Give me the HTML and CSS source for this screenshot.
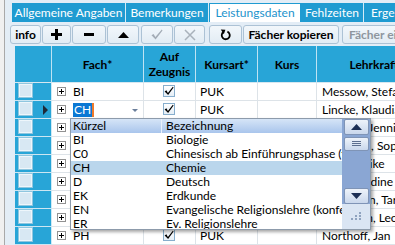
FILE: index.html
```html
<!DOCTYPE html>
<html>
<head>
<meta charset="utf-8">
<link rel="stylesheet" href="styles.css">
</head>
<body>
<div class="app">
  <div class="side"></div>
  <div class="main">
    <div class="tabs">
      <div class="tab t1">Allgemeine Angaben</div>
      <div class="tab t2">Bemerkungen</div>
      <div class="tab t3 active">Leistungsdaten</div>
      <div class="tab t4">Fehlzeiten</div>
      <div class="tab t5">Ergebnisse</div>
    </div>
    <div class="toolbar">
      <button class="btn b-info">info</button>
      <button class="btn b-plus"><svg width="11" height="11" viewBox="0 0 11 11"><path d="M4 0h3v4h4v3H7v4H4V7H0V4h4z" fill="#000"/></svg></button>
      <button class="btn b-minus"><svg width="10" height="3" viewBox="0 0 10 3"><rect width="10" height="3" fill="#000"/></svg></button>
      <button class="btn b-up"><svg width="11" height="6" viewBox="0 0 11 6"><path d="M5.5 0L11 6H0z" fill="#000"/></svg></button>
      <button class="btn b-ok"><svg width="12" height="11" viewBox="0 0 12 11"><path d="M0.5 6.2L2.5 5 4.4 8 10.8 0.6 11.5 1.4 4.6 10.6z" fill="#a3acb6"/></svg></button>
      <button class="btn b-x"><svg width="12" height="12" viewBox="0 0 12 12"><path d="M1 1l10 10M11 1L1 11" stroke="#a9b2bb" stroke-width="1.5" fill="none"/></svg></button>
      <button class="btn b-redo"><svg width="11" height="13" viewBox="0 0 11 13"><path d="M3.4 4A4 4 0 1 0 7.4 3.6" stroke="#000" stroke-width="1.8" fill="none"/><path d="M0.8 1.4L5.4 1.8 3.8 6.2z" fill="#000"/></svg></button>
      <button class="btn b-copy">Fächer kopieren</button>
      <button class="btn b-ein">Fächer einfügen</button>
    </div>
    <div class="gridwrap">
      <div class="grid">
        <div class="h sel"></div>
        <div class="h">Fach*</div>
        <div class="h">Auf<br>Zeugnis</div>
        <div class="h">Kursart*</div>
        <div class="h">Kurs</div>
        <div class="h">Lehrkraft*</div>

        <div class="c sel"><span class="sq"></span></div>
        <div class="c fach"><span class="pm"></span><span class="ft">BI</span></div>
        <div class="c az"><span class="cb"><svg width="10" height="10" viewBox="0 0 10 10"><path d="M0.6 5.4L2.4 4.3 3.9 6.9 8.8 0.8 9.6 1.6 4.1 9z" fill="#000"/></svg></span></div>
        <div class="c">PUK</div>
        <div class="c"></div>
        <div class="c lk">Messow, Stefan</div>

        <div class="c sel"><span class="sq"></span><span class="cur"></span></div>
        <div class="c fach"><span class="pm"></span><span class="ft"><span class="hl">CH</span><span class="caret"></span></span><span class="dda"></span></div>
        <div class="c az"><span class="cb"><svg width="10" height="10" viewBox="0 0 10 10"><path d="M0.6 5.4L2.4 4.3 3.9 6.9 8.8 0.8 9.6 1.6 4.1 9z" fill="#000"/></svg></span></div>
        <div class="c">PUK</div>
        <div class="c"></div>
        <div class="c lk">Lincke, Klaudia</div>

        <div class="c sel"><span class="sq"></span></div>
        <div class="c fach"><span class="pm"></span><span class="ft">D</span></div>
        <div class="c az"><span class="cb"><svg width="10" height="10" viewBox="0 0 10 10"><path d="M0.6 5.4L2.4 4.3 3.9 6.9 8.8 0.8 9.6 1.6 4.1 9z" fill="#000"/></svg></span></div>
        <div class="c">PUK</div>
        <div class="c"></div>
        <div class="c lk">Wagner, Jennifer</div>

        <div class="c sel"><span class="sq"></span></div>
        <div class="c fach"><span class="pm"></span><span class="ft">E</span></div>
        <div class="c az"><span class="cb"><svg width="10" height="10" viewBox="0 0 10 10"><path d="M0.6 5.4L2.4 4.3 3.9 6.9 8.8 0.8 9.6 1.6 4.1 9z" fill="#000"/></svg></span></div>
        <div class="c">PUK</div>
        <div class="c"></div>
        <div class="c lk">Hofmann, Sophie</div>

        <div class="c sel"><span class="sq"></span></div>
        <div class="c fach"><span class="pm"></span><span class="ft">EK</span></div>
        <div class="c az"><span class="cb"><svg width="10" height="10" viewBox="0 0 10 10"><path d="M0.6 5.4L2.4 4.3 3.9 6.9 8.8 0.8 9.6 1.6 4.1 9z" fill="#000"/></svg></span></div>
        <div class="c">PUK</div>
        <div class="c"></div>
        <div class="c lk">Beck, Ulrike</div>

        <div class="c sel"><span class="sq"></span></div>
        <div class="c fach"><span class="pm"></span><span class="ft">GE</span></div>
        <div class="c az"><span class="cb"><svg width="10" height="10" viewBox="0 0 10 10"><path d="M0.6 5.4L2.4 4.3 3.9 6.9 8.8 0.8 9.6 1.6 4.1 9z" fill="#000"/></svg></span></div>
        <div class="c">PUK</div>
        <div class="c"></div>
        <div class="c lk">Kuhn, Nadine</div>

        <div class="c sel"><span class="sq"></span></div>
        <div class="c fach"><span class="pm"></span><span class="ft">M</span></div>
        <div class="c az"><span class="cb"><svg width="10" height="10" viewBox="0 0 10 10"><path d="M0.6 5.4L2.4 4.3 3.9 6.9 8.8 0.8 9.6 1.6 4.1 9z" fill="#000"/></svg></span></div>
        <div class="c">PUK</div>
        <div class="c"></div>
        <div class="c lk">Bergmann, Tara</div>

        <div class="c sel"><span class="sq"></span></div>
        <div class="c fach"><span class="pm"></span><span class="ft">MU</span></div>
        <div class="c az"><span class="cb"><svg width="10" height="10" viewBox="0 0 10 10"><path d="M0.6 5.4L2.4 4.3 3.9 6.9 8.8 0.8 9.6 1.6 4.1 9z" fill="#000"/></svg></span></div>
        <div class="c">PUK</div>
        <div class="c"></div>
        <div class="c lk">Simonsen, Leon</div>

        <div class="c sel"><span class="sq"></span></div>
        <div class="c fach"><span class="pm"></span><span class="ft">PH</span></div>
        <div class="c az"><span class="cb"><svg width="10" height="10" viewBox="0 0 10 10"><path d="M0.6 5.4L2.4 4.3 3.9 6.9 8.8 0.8 9.6 1.6 4.1 9z" fill="#000"/></svg></span></div>
        <div class="c">PUK</div>
        <div class="c"></div>
        <div class="c lk">Northoff, Jan</div>
      </div>

      <div class="dropdown">
        <div class="dd-list">
          <div class="dd-row dd-head"><span class="k">Kürzel</span><span class="b">Bezeichnung</span></div>
          <div class="dd-row"><span class="k">BI</span><span class="b">Biologie</span></div>
          <div class="dd-row"><span class="k">C0</span><span class="b">Chinesisch ab Einführungsphase (fortgeführt)</span></div>
          <div class="dd-row cur-item"><span class="k">CH</span><span class="b">Chemie</span></div>
          <div class="dd-row"><span class="k">D</span><span class="b">Deutsch</span></div>
          <div class="dd-row"><span class="k">EK</span><span class="b">Erdkunde</span></div>
          <div class="dd-row"><span class="k">EN</span><span class="b">Evangelische Religionslehre (konfessionell)</span></div>
          <div class="dd-row"><span class="k">ER</span><span class="b">Ev. Religionslehre</span></div>
        </div>
        <div class="dd-scroll">
          <div class="sb-btn"><svg width="11" height="6" viewBox="0 0 11 6"><path d="M5.5 0L11 6H0z" fill="#1c2f55"/></svg></div>
          <div class="sb-thumb"><svg width="9" height="6" viewBox="0 0 9 6"><path d="M0 .5h9M0 2.5h9M0 4.5h9" stroke="#5d6f8f" stroke-width="1"/></svg></div>
          <div class="sb-track"></div>
          <div class="sb-btn"><svg width="11" height="6" viewBox="0 0 11 6"><path d="M0 0h11L5.5 6z" fill="#1c2f55"/></svg></div>
          <div class="sb-grip"><svg width="12" height="9" viewBox="0 0 12 9"><g fill="#8fa3bf"><rect x="9" y="0" width="2" height="2"/><rect x="5" y="3" width="2" height="2"/><rect x="9" y="3" width="2" height="2"/><rect x="1" y="6" width="2" height="2"/><rect x="5" y="6" width="2" height="2"/><rect x="9" y="6" width="2" height="2"/></g></svg></div>
        </div>
      </div>
    </div>
  </div>
</div>
</body>
</html>
```

FILE: styles.css
```css
* { box-sizing: border-box; }
html, body { margin: 0; padding: 0; }
body {
  width: 395px;
  height: 245px;
  overflow: hidden;
  background: #f0f0f0;
  font-family: Lato, "Noto Sans", sans-serif;
  font-size: 12px;
  color: #000;
}
.app { display: flex; height: 245px; }
.side { flex: none; width: 5px; background: #f0f0f0; border-right: 1px solid #a9a9a9; }
.main { flex: 1; min-width: 0; background: #e3edf6; padding-top: 3px; overflow: hidden; }

.tabs { display: flex; margin-left: 7px; height: 19px; background: #1f9bd1; white-space: nowrap; }
.tab { flex: none; color: #fff; line-height: 19px; text-align: center; border-right: 1px solid #d4ecf7; overflow: hidden; }
.t1 { width: 114px; }
.t2 { width: 83px; }
.t3 { width: 92px; }
.t4 { width: 63px; }
.t5 { width: 60px; text-align: left; padding-left: 7px; border-right: 0; }
.tab.active { background: #fff; color: #1c93cc; border: 1px solid #1f9bd1; border-bottom: 0; line-height: 18px; }

.toolbar { display: flex; height: 24px; padding: 3px 0 0 5px; white-space: nowrap; }
.btn {
  flex: none;
  height: 19px;
  margin: 0 1px 0 0;
  padding: 0;
  border: 1px solid #acc2d5;
  border-radius: 3px;
  background: linear-gradient(#f2f7fb, #e2ecf4);
  display: flex;
  align-items: center;
  justify-content: center;
  font-family: inherit;
  font-size: 12px;
  font-weight: bold;
  color: #000;
}
.b-info { width: 31px; }
.b-plus { width: 29px; }
.b-minus { width: 34px; }
.b-up { width: 32px; margin-right: 2px; }
.b-ok { width: 32px; }
.b-x { width: 31px; margin-right: 4px; }
.b-redo { width: 33px; }
.b-copy { width: 96px; margin-right: 3px; }
.b-ein { width: 90px; color: #8e969e; justify-content: flex-start; padding-left: 6px; }

.gridwrap { position: relative; margin-left: 10px; }
.grid {
  display: grid;
  grid-template-columns: 37px 92px 52px 62px 59px 120px;
  grid-template-rows: 37px repeat(9, 18px);
  background: #fff;
}
.h {
  background: #28a5d7;
  border-right: 1px solid #bfe3f3;
  border-bottom: 1px solid #d7e7f0;
  color: #000;
  font-weight: bold;
  display: flex;
  align-items: center;
  justify-content: center;
  text-align: center;
  line-height: 15px;
}
.c {
  border-right: 1px solid #dde3e8;
  border-bottom: 1px solid #dde3e8;
  padding-left: 4px;
  line-height: 17px;
  white-space: nowrap;
  overflow: hidden;
  position: relative;
}
.c.sel { background: #28a5d7; border-right: 1px solid #cfeaf6; border-bottom: 1px solid #cde6f2; padding: 0; }
.sq { position: absolute; left: 4px; top: 1px; width: 13px; height: 13px; background: #d8e8f3; border: 1px solid #eef6fb; box-shadow: 0 0 0 1px #8fc6df; }
.cur { position: absolute; left: 28px; top: 4px; width: 0; height: 0; border-left: 5px solid #1e2a38; border-top: 5px solid transparent; border-bottom: 5px solid transparent; }
.fach { padding-left: 5px; display: flex; align-items: center; }
.pm { flex: none; width: 9px; height: 9px; border: 1px solid #919191; background: #fff; position: relative; margin-right: 7px; }
.pm::before { content: ""; position: absolute; left: 1px; top: 3px; width: 5px; height: 1px; background: #000; }
.pm::after { content: ""; position: absolute; left: 3px; top: 1px; width: 1px; height: 5px; background: #000; }
.ft { display: flex; align-items: center; height: 17px; }
.hl { background: #0a78d4; color: #fff; padding: 0 1px; line-height: 14px; }
.caret { width: 2px; height: 14px; background: #f07a2a; }
.dda { position: absolute; left: 80px; top: 8px; width: 0; height: 0; border-top: 3px solid #6b7f9b; border-left: 3px solid transparent; border-right: 3px solid transparent; }
.az { padding: 0; display: flex; justify-content: center; align-items: flex-start; }
.cb { margin-top: 2px; margin-left: -2px; width: 12px; height: 12px; border: 1px solid #87aecd; background: linear-gradient(#ffffff, #e5eef6); display: flex; align-items: center; justify-content: center; }
.lk { padding-left: 5px; }

.dropdown {
  position: absolute;
  left: 55px;
  top: 72px;
  width: 301px;
  height: 112px;
  display: flex;
  background: #fff;
  border: 1px solid #8d9bab;
  box-shadow: 2px 2px 3px rgba(0, 0, 0, 0.35);
}
.dd-list { flex: 1; min-width: 0; overflow: hidden; }
.dd-row { display: flex; height: 14px; line-height: 14px; white-space: nowrap; }
.dd-row .k { flex: none; width: 91px; padding-left: 2px; }
.dd-row .b { flex: 1; min-width: 0; overflow: hidden; padding-left: 4px; }
.dd-head { height: 14px; line-height: 14px; background: linear-gradient(#d6e5f7, #a9c5ec); }
.dd-head .k { border-right: 1px solid #eaf1fb; }
.cur-item { background: #bad6ec; }
.dd-scroll { flex: none; width: 28px; background: #8aa6d3; display: flex; flex-direction: column; align-items: center; }
.sb-btn { flex: none; width: 25px; height: 16px; border: 1px solid #7f94b6; border-radius: 2px; background: linear-gradient(#eef3fa, #c9d7ec); display: flex; align-items: center; justify-content: center; }
.sb-thumb { flex: none; margin-top: 2px; width: 25px; height: 14px; border: 1px solid #7f94b6; border-radius: 2px; background: linear-gradient(#eef3fa, #c9d7ec); display: flex; align-items: center; justify-content: center; }
.sb-track { flex: 1; }
.sb-grip { flex: none; width: 28px; height: 25px; background: #dae5f3; display: flex; align-items: center; justify-content: center; }
```
